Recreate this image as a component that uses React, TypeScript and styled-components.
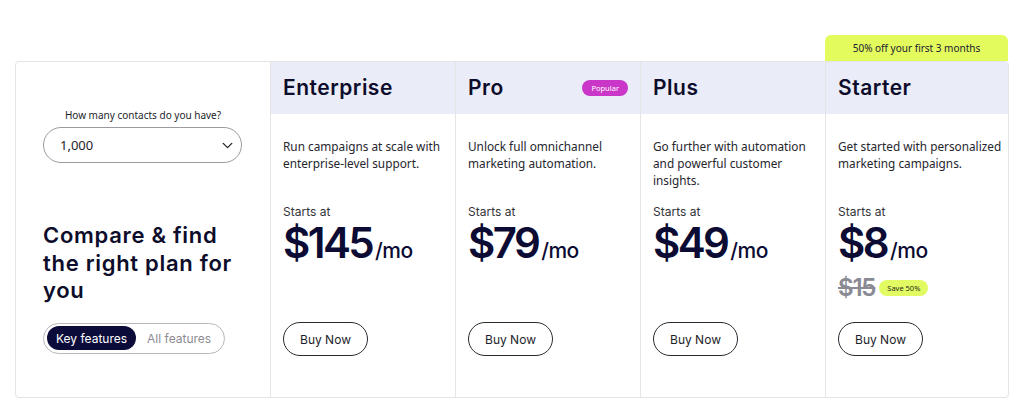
import React, { useState } from "react";
import styled, { createGlobalStyle } from "styled-components";

const GlobalStyle = createGlobalStyle`
  body {
    margin: 0;
    background: #ffffff;
    font-family: "Noto Sans", "Liberation Sans", sans-serif;
    color: #0d0d2b;
  }
  * { box-sizing: border-box; }
`;

type Plan = {
  name: string;
  desc: string;
  price: string;
  popular?: boolean;
  was?: string;
};

const plans: Plan[] = [
  { name: "Enterprise", desc: "Run campaigns at scale with enterprise-level support.", price: "$145" },
  { name: "Pro", desc: "Unlock full omnichannel marketing automation.", price: "$79", popular: true },
  { name: "Plus", desc: "Go further with automation and powerful customer insights.", price: "$49" },
  { name: "Starter", desc: "Get started with personalized marketing campaigns.", price: "$8", was: "$15" },
];

const App = () => {
  const [mode, setMode] = useState<"key" | "all">("key");

  return (
    <Page>
      <GlobalStyle />
      <PromoRow>
        <Promo>50% off your first 3 months</Promo>
      </PromoRow>
      <Card>
        <Intro>
          <ContactsLabel>How many contacts do you have?</ContactsLabel>
          <Select>
            <span>1,000</span>
            <svg width="11" height="7" viewBox="0 0 11 7" fill="none">
              <path d="M1.2 1.4L5.5 5.6L9.8 1.4" stroke="#222" strokeWidth="1.3" strokeLinecap="round" strokeLinejoin="round" />
            </svg>
          </Select>
          <Heading>Compare &amp; find the right plan for you</Heading>
          <Toggle>
            <ToggleOption $active={mode === "key"} onClick={() => setMode("key")}>
              Key features
            </ToggleOption>
            <ToggleOption $active={mode === "all"} onClick={() => setMode("all")}>
              All features
            </ToggleOption>
          </Toggle>
        </Intro>
        {plans.map((plan) => (
          <PlanColumn key={plan.name}>
            <PlanHeader>
              <PlanName>{plan.name}</PlanName>
              {plan.popular && <PopularBadge>Popular</PopularBadge>}
            </PlanHeader>
            <PlanBody>
              <Description>{plan.desc}</Description>
              <StartsAt>Starts at</StartsAt>
              <PriceRow>
                <Price>{plan.price}</Price>
                <PerMonth>/mo</PerMonth>
              </PriceRow>
              {plan.was && (
                <WasRow>
                  <WasPrice>{plan.was}</WasPrice>
                  <SaveBadge>Save 50%</SaveBadge>
                </WasRow>
              )}
              <BuyButton>Buy Now</BuyButton>
            </PlanBody>
          </PlanColumn>
        ))}
      </Card>
    </Page>
  );
};

export default App;

const Page = styled.div`
  width: 1024px;
  height: 401px;
  padding: 35px 0 0 15px;
`;

const PromoRow = styled.div`
  display: flex;
  justify-content: flex-end;
  width: 994px;
  padding-right: 1px;
`;

const Promo = styled.div`
  width: 183px;
  height: 26px;
  background: #e4fb5e;
  border-radius: 6px 6px 0 0;
  display: flex;
  align-items: center;
  justify-content: center;
  font-size: 10px;
  color: #1a1a2e;
`;

const Card = styled.div`
  width: 994px;
  height: 337px;
  border: 1px solid #e4e4e6;
  border-radius: 4px;
  display: grid;
  grid-template-columns: 254px 185px 185px 185px 1fr;
  overflow: hidden;
`;

const Intro = styled.div`
  display: flex;
  flex-direction: column;
  padding: 46px 0 0 27px;
`;

const ContactsLabel = styled.div`
  width: 200px;
  text-align: center;
  font-size: 10px;
  color: #1e1e2a;
  line-height: 14px;
`;

const Select = styled.div`
  margin-top: 5px;
  width: 199px;
  height: 36px;
  border: 1px solid #9a9aa0;
  border-radius: 18px;
  display: flex;
  align-items: center;
  justify-content: space-between;
  padding: 0 8px 0 16px;
  font-size: 13px;
  color: #1e1e2a;
`;

const Heading = styled.h2`
  margin: 59px 0 0;
  width: 196px;
  font-family: Inter, "Liberation Sans", sans-serif;
  font-weight: 600;
  font-size: 22px;
  line-height: 27.5px;
  letter-spacing: 0.7px;
  color: #0d0d2b;
`;

const Toggle = styled.div`
  margin-top: 18px;
  width: 182px;
  height: 31px;
  border: 1px solid #b8b8bf;
  border-radius: 16px;
  display: flex;
  align-items: center;
  padding: 0 3px;
  gap: 2px;
`;

const ToggleOption = styled.button<{ $active: boolean }>`
  height: 24px;
  border: none;
  border-radius: 12px;
  padding: 0 9px;
  font-family: Inter, "Liberation Sans", sans-serif;
  font-size: 12px;
  cursor: pointer;
  background: ${(p) => (p.$active ? "#0c0c3a" : "transparent")};
  color: ${(p) => (p.$active ? "#ffffff" : "#8c8c94")};
`;

const PlanColumn = styled.div`
  border-left: 1px solid #e4e4e6;
  display: flex;
  flex-direction: column;
`;

const PlanHeader = styled.div`
  height: 52px;
  background: #eaecf8;
  display: flex;
  align-items: center;
  justify-content: space-between;
  padding: 0 12px 1px;
`;

const PlanName = styled.div`
  font-family: Inter, "Liberation Sans", sans-serif;
  font-weight: 600;
  font-size: 21px;
  letter-spacing: 0.5px;
  color: #0d0d2b;
`;

const PopularBadge = styled.span`
  height: 16px;
  padding: 0 9px;
  border-radius: 8px;
  background: #c936c8;
  color: #ffffff;
  font-size: 7.5px;
  display: flex;
  align-items: center;
`;

const PlanBody = styled.div`
  flex: 1;
  display: flex;
  flex-direction: column;
  align-items: flex-start;
  padding: 24px 3px 41px 12px;
`;

const Description = styled.p`
  margin: 0;
  height: 66px;
  font-size: 11.8px;
  line-height: 17px;
  color: #26262e;
`;

const StartsAt = styled.div`
  font-family: Inter, "Liberation Sans", sans-serif;
  font-size: 12px;
  line-height: 16px;
  color: #33333a;
`;

const PriceRow = styled.div`
  display: flex;
  align-items: baseline;
  margin-top: 2px;
  height: 42px;
`;

const Price = styled.span`
  font-family: Inter, "Liberation Sans", sans-serif;
  font-weight: 600;
  font-size: 42px;
  line-height: 42px;
  letter-spacing: -2.6px;
  color: #0b0b33;
`;

const PerMonth = styled.span`
  margin-left: 3px;
  font-family: Inter, "Liberation Sans", sans-serif;
  font-weight: 500;
  font-size: 21px;
  letter-spacing: -0.5px;
  color: #0b0b33;
`;

const WasRow = styled.div`
  display: flex;
  align-items: center;
  gap: 4px;
  margin-top: 12px;
`;

const WasPrice = styled.span`
  font-family: Inter, "Liberation Sans", sans-serif;
  font-weight: 600;
  font-size: 24px;
  line-height: 24px;
  letter-spacing: -1.2px;
  color: #8a8a94;
  text-decoration: line-through;
  text-decoration-thickness: 2px;
`;

const SaveBadge = styled.span`
  height: 16px;
  padding: 0 8px;
  border-radius: 8px;
  background: #e2fb63;
  font-size: 7.5px;
  color: #2a2a20;
  display: flex;
  align-items: center;
`;

const BuyButton = styled.button`
  margin-top: auto;
  width: 85px;
  height: 34px;
  border: 1px solid #2a2a33;
  border-radius: 17px;
  background: #ffffff;
  font-family: Inter, "Liberation Sans", sans-serif;
  font-size: 12px;
  color: #1e1e2a;
  cursor: pointer;
`;
